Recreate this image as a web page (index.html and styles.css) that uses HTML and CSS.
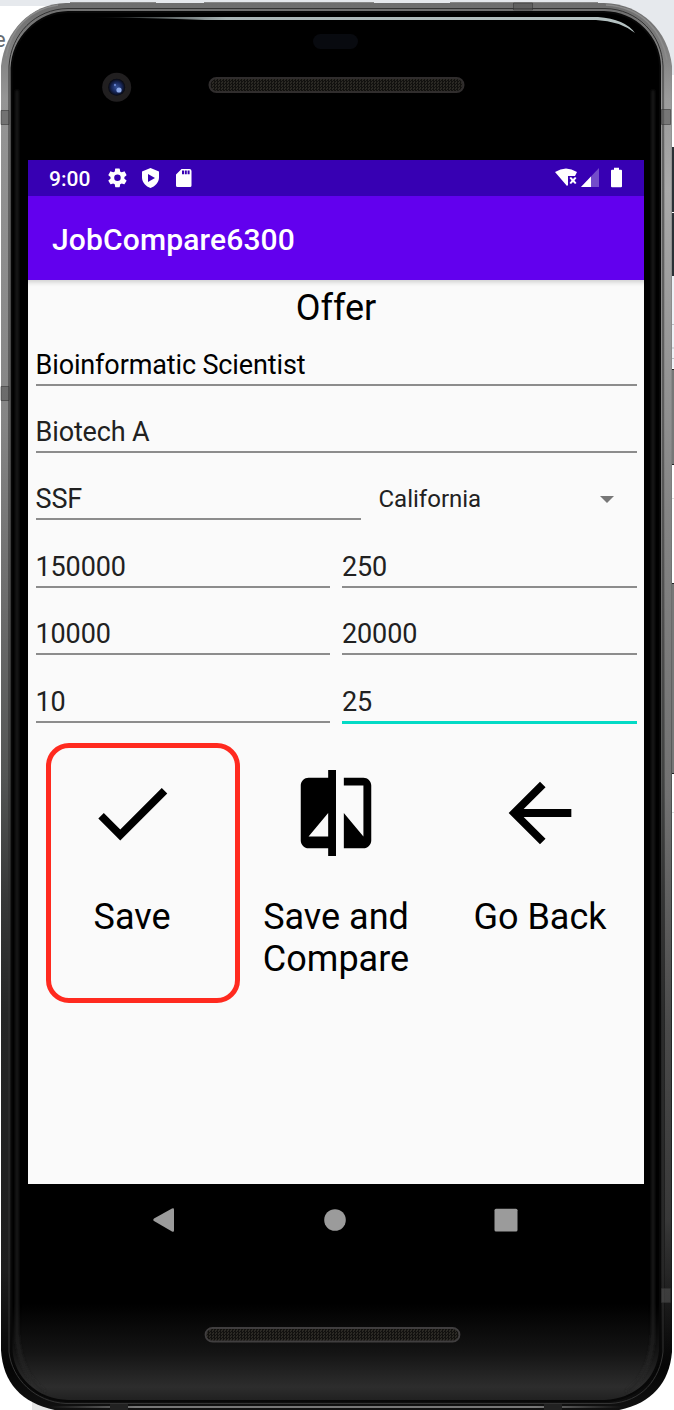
FILE: index.html
```
<!DOCTYPE html>
<html lang="en">
<head>
<meta charset="utf-8">
<title>JobCompare6300</title>
<link rel="stylesheet" href="styles.css">
</head>
<body>
<div class="stage">
  <span class="behind-text">e</span>
  <svg class="device" viewBox="0 0 674 1410" aria-hidden="true">
    <defs>
      <linearGradient id="metal" gradientUnits="userSpaceOnUse" x1="0" y1="0" x2="0" y2="1410">
        <stop offset="0" stop-color="#6c6c6c"/><stop offset=".07" stop-color="#959595"/><stop offset=".3" stop-color="#858585"/><stop offset=".45" stop-color="#686868"/><stop offset=".55" stop-color="#545655"/><stop offset=".64" stop-color="#363737"/><stop offset=".72" stop-color="#252626"/><stop offset=".9" stop-color="#1d1d1d"/><stop offset=".97" stop-color="#050505"/><stop offset="1" stop-color="#111"/>
      </linearGradient>
      <linearGradient id="metal-right" gradientUnits="userSpaceOnUse" x1="0" y1="60" x2="0" y2="1350">
        <stop offset="0" stop-color="#aaa" stop-opacity="0"/><stop offset=".1" stop-color="#aaa"/><stop offset=".35" stop-color="#858585"/><stop offset=".57" stop-color="#727272"/><stop offset=".75" stop-color="#4a4a4a"/><stop offset=".9" stop-color="#383838"/><stop offset="1" stop-color="#1c1c1c" stop-opacity="0"/>
      </linearGradient>
      <linearGradient id="sheen" x1="0" y1="0" x2="0" y2="1">
        <stop offset="0" stop-color="#000"/><stop offset=".93" stop-color="#000"/><stop offset=".965" stop-color="#141414"/><stop offset=".99" stop-color="#2d2d2d"/><stop offset="1" stop-color="#202020"/>
      </linearGradient>
      <linearGradient id="glint" x1="0" y1="0" x2="1" y2="0">
        <stop offset="0" stop-color="#a8b4b5" stop-opacity="0"/><stop offset=".25" stop-color="#a8b4b5"/><stop offset="1" stop-color="#b5c2c2"/>
      </linearGradient>
      <linearGradient id="bottom-rail" x1="0" y1="0" x2="1" y2="0">
        <stop offset="0" stop-color="#777" stop-opacity="0"/><stop offset=".15" stop-color="#777"/><stop offset=".85" stop-color="#777"/><stop offset="1" stop-color="#777" stop-opacity="0"/>
      </linearGradient>
      <radialGradient id="lens"><stop offset="0" stop-color="#345198"/><stop offset=".6" stop-color="#172657"/><stop offset="1" stop-color="#07080f"/></radialGradient>
      <pattern id="mesh" width="3" height="3" patternUnits="userSpaceOnUse"><rect width="3" height="3" fill="#12110f"/><path d="M0 0h1v2h-1zM2 1h1v2h-1z" fill="#2b2924"/></pattern>
      <filter id="soft" x="-20" y="-20" width="714" height="1450" filterUnits="userSpaceOnUse"><feGaussianBlur stdDeviation="1.800"/></filter>
    </defs>
    <path fill="#e6e9ed" d="M0 0H674V75H600V6H0z"/>
    <path fill="#2a3035" d="M670 147h4v129h-4z"/><path fill="#fff" d="M672 212h2v1h-2z"/>
    <path fill="#edf1f6" d="M670 276h4v92h-4z"/>
    <path stroke="#b9bdc1" d="M670 324.500h4M670 348h4M670 358.500h4"/>
    <path stroke="#ddd" d="M670 498.500h4M670 812.500h4"/>
    <path fill="#777" stroke="#222" d="M671.500 369.500h5v95h-5zM671.500 583.500h5v190h-5z"/>
    <path fill="#e6e6e6" d="M32 1400h40v10H32z"/>
    <path fill="url(#metal)" d="M66 3H604C642 4 668 31 672 66V1352C669 1385 650 1405 614 1411H60C24 1405 3 1385 1 1350V66C5 31 30 4 66 3z"/>
    <path fill="url(#metal-right)" d="M665 60h6v1290h-6z"/>
    <path fill="none" stroke="#8b8b8b" stroke-width="1.500" d="M58 5C29 9 11 29 6 56M606 5C642 7 662 31 667 60"/>
    <path fill="#888" d="M70 2h86v1H70zM204 2h170v1H204zM450 2h148v1H450z"/>
    <path fill="none" stroke="#333" d="M68 8.500H605C638 9 662 35 663 66V1352C660 1379 642 1402 610 1403.500H66C35 1402 12 1379 9 1352V66C11 34 35 9 68 8.500z"/>
    <path fill="url(#sheen)" stroke="#080808" stroke-width="2" d="M68 12H604C637 13 659 38 660 66V1351C657 1379 637 1399 605 1401H68C36 1400 13 1377 11.500 1350V68C13 38 37 13 68 12z"/>
    <path fill="none" stroke="#262626" stroke-width="3" opacity=".85" filter="url(#soft)" d="M17 90V1335Q20 1374 44 1392M653 90V1335Q651 1374 627 1392"/>
    <path fill="#555" fill-opacity=".55" stroke="#333" stroke-opacity=".55" d="M1 110.500h8v14H1zM661.500 109.500h9v15h-9zM1 386.500h8v14H1zM513.500 3h19v7h-19zM661.500 1288.500h9v14h-9z"/>
    <path fill="url(#bottom-rail)" d="M50 1406h572v2H50z"/>
    <path fill="#222" d="M110 1404h18v6h-18zM544 1404h18v6h-18z"/>
    <path fill="url(#glint)" d="M90 17H598Q625 19 635 33Q620 21 596 20H205Q150 18 90 17z"/>
    <rect x="313" y="34" width="45" height="15" rx="7.500" fill="#080a0f"/>
    <circle cx="116.700" cy="87.300" r="14.500" fill="#211f20"/><circle cx="116.700" cy="87.300" r="8.500" fill="url(#lens)"/><circle cx="119" cy="90" r="2.600" fill="#8da9e8"/><circle cx="115" cy="85" r="1.200" fill="#637dc8"/>
    <rect x="209.500" y="78" width="254" height="14" rx="7" fill="url(#mesh)" stroke="#302d2d" stroke-width="2"/>
    <rect x="205.500" y="1328" width="254" height="13.500" rx="7" fill="url(#mesh)" stroke="#403e3f" stroke-width="1.800"/>
  </svg>

  <main class="screen">
    <header class="status">
      <span class="clock">9:00</span>
      <svg class="status-left" viewBox="0 0 86 24">
        <path fill="#fff" fill-rule="evenodd" transform="translate(-.7 .7) scale(.93)" d="M19.430 12.980c.04-.32.07-.64.07-.98s-.03-.66-.07-.98l2.110-1.650c.19-.15.24-.42.12-.64l-2-3.460c-.12-.22-.39-.3-.61-.22l-2.490 1c-.52-.4-1.080-.73-1.690-.98l-.38-2.650A.49.490 0 0 0 14 2h-4c-.25 0-.46.180-.49.420l-.38 2.650c-.61.250-1.170.590-1.690.980l-2.490-1c-.23-.09-.49 0-.61.220l-2 3.460c-.13.220-.07.490.12.640l2.110 1.650c-.04.320-.07.650-.07.980s.03.660.07.980l-2.110 1.650c-.19.150-.24.420-.12.640l2 3.460c.12.220.39.300.61.220l2.490-1c.52.400 1.080.730 1.690.980l.38 2.650c.03.240.24.420.49.420h4c.25 0 .46-.18.490-.42l.38-2.650c.61-.25 1.170-.59 1.690-.98l2.490 1c.23.090.49 0 .61-.22l2-3.460c.12-.22.07-.49-.12-.64zM12 15.500a3.500 3.500 0 1 1 0-7 3.500 3.500 0 0 1 0 7z"/>
        <path fill="#fff" fill-rule="evenodd" d="M43.500 2l8.500 3.500v6c0 5-4 9-8.500 10.500-4.500-1.500-8.500-5.500-8.500-10.500v-6zM41 8v8l7-4z"/>
        <path fill="#fff" fill-rule="evenodd" d="M82.500 3q2 0 2 2v14.500q0 1.500-1.500 1.500H70.500q-1.500 0-1.500-1.500V8.500L74.500 3zM75 4.500v3.800h2v-3.800zm2.800 0v3.800h2v-3.800zm2.800 0v3.800h2v-3.800z"/>
      </svg>
      <svg class="status-right" viewBox="0 0 70 24">
        <path fill="#fff" d="M1 6Q12-1 23 6l-2 4h-7v9l-1 1zM15.500 12l1.500-1 2 2 2-2 1.500 1-2 2.500 2 2.500-1.500 1-2-2-2 2-1.500-1 2-2.500z"/>
        <path fill="#fff" opacity=".3" d="M45 2v19H27z"/><path fill="#fff" d="M37 10.500V21H27z"/>
        <path fill="#fff" d="M60 1.800h5v2h2q1 0 1 1v15.500q0 1-1 1H58q-1 0-1-1V4.800q0-1 1-1h2z"/>
      </svg>
    </header>
    <div class="appbar">JobCompare6300</div>
    <div class="content">
      <h1 class="title">Offer</h1>
      <div class="form">
        <div class="row"><div class="field first">Bioinformatic Scientist</div></div>
        <div class="row"><div class="field">Biotech A</div></div>
        <div class="row location"><div class="field">SSF</div><div class="spinner"><span>California</span><i class="caret"></i></div></div>
        <div class="row"><div class="field">150000</div><div class="field">250</div></div>
        <div class="row"><div class="field">10000</div><div class="field">20000</div></div>
        <div class="row"><div class="field">10</div><div class="field focused">25</div></div>
      </div>
      <div class="actions">
        <div class="action">
          <svg class="icon" viewBox="0 0 24 24"><path d="M9 16.200L4.800 12l-1.400 1.400L9 19 21 7l-1.400-1.400L9 16.200z"/></svg>
          <span>Save</span>
        </div>
        <div class="action">
          <svg class="icon" viewBox="0 0 24 24"><path d="M10 3H5c-1.100 0-2 .9-2 2v14c0 1.100.9 2 2 2h5v2h2V1h-2v2zm0 15H5l5-6v6zm9-15h-5v2h5v13l-5-6v9h5c1.100 0 2-.9 2-2V5c0-1.100-.9-2-2-2z"/></svg>
          <span>Save and<br>Compare</span>
        </div>
        <div class="action">
          <svg class="icon" viewBox="0 0 24 24"><path d="M20 11H7.830l5.590-5.590L12 4l-8 8 8 8 1.410-1.410L7.830 13H20v-2z"/></svg>
          <span>Go Back</span>
        </div>
      </div>
    </div>
    <div class="highlight"></div>
  </main>
  <nav class="navbar">
    <svg viewBox="0 0 24 24"><path d="M2 10.500L20 .5q2-.8 2 1v21q0 1.800-2 1l-18-10.500q-1.500-1 0-2.500z"/></svg>
    <svg viewBox="0 0 24 24"><circle cx="12" cy="12" r="10.800"/></svg>
    <svg viewBox="0 0 24 24"><rect x=".5" y=".8" width="23" height="22.800" rx="1.500"/></svg>
  </nav>
</div>
</body>
</html>
```
FILE: styles.css
```
* { box-sizing: border-box; }
body { margin: 0; background: #fff; font-family: Roboto, sans-serif; }
.stage { position: relative; width: 674px; height: 1410px; overflow: hidden; padding: 160px 30px 0 28px; }
.behind-text { position: absolute; left: 0; top: 27px; width: 7px; font-size: 22px; text-indent: -6px; color: #666b70; }
.device { position: absolute; inset: 0; width: 674px; height: 1410px; }
.screen { position: relative; width: 616px; height: 1024px; background: #fafafa; color: #000; }
.status { height: 36px; background: #3700b3; color: #fff; display: flex; align-items: center; padding: 0 20px 0 21px; }
.clock { font-size: 21px; font-weight: 500; width: 42px; line-height: 36px; padding-top: 2px; }
.status-left { width: 86px; height: 24px; margin-left: 16px; }
.status-right { width: 70px; height: 24px; margin-left: auto; }
.appbar { height: 84px; line-height: 87px; padding-left: 24px; background: #6200ee; color: #fff; font-size: 30px; font-weight: 500; letter-spacing: .15px; }
.content { box-shadow: inset 0 6px 5px -4px #ccc; }
.title { margin: 0; height: 55.600px; line-height: 57px; text-align: center; font-size: 36px; font-weight: 400; }
.form { padding: 0 7.500px; display: grid; gap: 17.400px; }
.row { display: flex; gap: 12px; height: 50px; }
.field { flex: 1; border-bottom: 2px solid #8c8c8c; font-size: 27px; letter-spacing: -.13px; line-height: 59px; color: #212121; white-space: nowrap; }
.field.first { color: #000; }
.field.focused { border-bottom: 3px solid #03dac5; height: 51px; }
.location { gap: 18px; }
.location .field { flex: 0 0 325px; }
.spinner { flex: 1; display: flex; align-items: center; justify-content: space-between; padding: 8px 23px 0 0; font-size: 24px; color: #212121; }
.caret { border: 7.500px solid transparent; border-top-color: #777; border-bottom: 0; }
.actions { display: grid; grid-template-columns: repeat(3, 204px); justify-content: center; padding-top: 43px; }
.action { display: flex; flex-direction: column; align-items: center; gap: 36px; text-align: center; font-size: 36px; line-height: 42px; }
.icon { width: 94px; height: 94px; }
.highlight { position: absolute; left: 18px; top: 583px; width: 194px; height: 260px; border: 5px solid #ff2a1f; border-radius: 23px; }
.navbar { position: relative; height: 72px; display: flex; justify-content: space-between; align-items: center; padding: 0 126px 0 124px; width: 616px; fill: #9b9b9b; }
.navbar svg { width: 24px; height: 24px; }
```
